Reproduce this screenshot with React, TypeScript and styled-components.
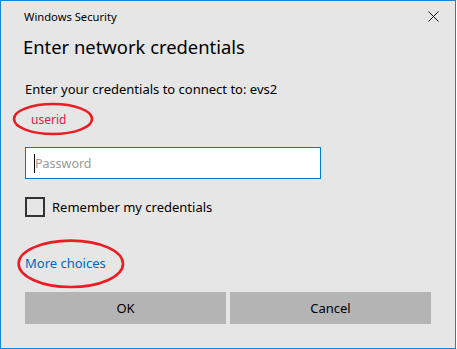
import React from "react";
import styled, { createGlobalStyle } from "styled-components";

const Global = createGlobalStyle`
  html, body { margin: 0; padding: 0; background: #ffffff; }
  body { font-family: "Noto Sans", "Open Sans", sans-serif; }
`;

const Window = styled.div`
  position: relative;
  box-sizing: border-box;
  width: 456px;
  height: 349px;
  background: #e6e6e6;
  border: 1px solid #1883d7;
  color: #000;
  font-family: "Noto Sans", sans-serif;
`;

const TitleBar = styled.div`
  display: flex;
  align-items: center;
  justify-content: space-between;
  height: 31px;
  padding: 0 12px 0 23px;
`;

const TitleText = styled.span`
  font-size: 11.2px;
  color: #000;
`;

const CloseButton = styled.button`
  display: flex;
  align-items: center;
  justify-content: center;
  width: 20px;
  height: 20px;
  padding: 0;
  border: none;
  background: transparent;
`;

const Body = styled.div`
  display: flex;
  flex-direction: column;
  padding: 0 23px 0 24px;
`;

const Heading = styled.h1`
  margin: 1px 0 0 -2px;
  font-size: 18.4px;
  font-weight: 400;
  line-height: 28px;
  color: #000;
`;

const Prompt = styled.p`
  margin: 18px 0 0;
  font-size: 13px;
  line-height: 20px;
`;

const UserName = styled.div`
  margin: 12px 0 0 6px;
  font-size: 12px;
  line-height: 18px;
  color: #e8174a;
`;

const PasswordBox = styled.div`
  display: flex;
  align-items: center;
  box-sizing: border-box;
  width: 296px;
  height: 32px;
  margin-top: 18px;
  padding-left: 8px;
  background: #fff;
  border: 1px solid #0078d7;
`;

const Caret = styled.span`
  width: 1px;
  height: 19px;
  background: #000;
`;

const Placeholder = styled.span`
  font-size: 12.5px;
  color: #9a9a9a;
`;

const CheckRow = styled.label`
  display: flex;
  align-items: center;
  gap: 7px;
  margin-top: 18px;
  font-size: 13px;
  line-height: 20px;
`;

const CheckBox = styled.span`
  box-sizing: border-box;
  width: 20px;
  height: 20px;
  border: 2px solid #333;
`;

const MoreLink = styled.a`
  margin-top: 36px;
  font-size: 13px;
  line-height: 20px;
  color: #0067c0;
  text-decoration: none;
`;

const ButtonRow = styled.div`
  display: flex;
  gap: 4px;
  margin-top: 19px;
  width: 406px;
`;

const DialogButton = styled.button`
  flex: 1;
  height: 32px;
  padding: 0;
  border: none;
  background: #b4b4b4;
  font-family: "Noto Sans", sans-serif;
  font-size: 13px;
  color: #000;
`;

const Annotation = styled.svg`
  position: absolute;
  left: -1px;
  top: -1px;
  pointer-events: none;
`;

export default function App() {
  return (
    <>
      <Global />
      <Window>
        <TitleBar>
          <TitleText>Windows Security</TitleText>
          <CloseButton aria-label="Close">
            <svg width="11" height="11" viewBox="0 0 11 11">
              <path d="M0.5 0.5 L10.5 10.5 M10.5 0.5 L0.5 10.5" stroke="#111" strokeWidth="1" fill="none" />
            </svg>
          </CloseButton>
        </TitleBar>
        <Body>
          <Heading>Enter network credentials</Heading>
          <Prompt>Enter your credentials to connect to: evs2</Prompt>
          <UserName>userid</UserName>
          <PasswordBox>
            <Caret />
            <Placeholder>Password</Placeholder>
          </PasswordBox>
          <CheckRow>
            <CheckBox />
            Remember my credentials
          </CheckRow>
          <MoreLink>More choices</MoreLink>
          <ButtonRow>
            <DialogButton>OK</DialogButton>
            <DialogButton>Cancel</DialogButton>
          </ButtonRow>
        </Body>
        <Annotation width="457" height="349" viewBox="0 0 457 349">
          <ellipse cx="53" cy="119" rx="39" ry="15" fill="none" stroke="#ed1c24" strokeWidth="2.6" />
          <ellipse cx="70.8" cy="263.8" rx="52.2" ry="23.2" fill="none" stroke="#ed1c24" strokeWidth="2.6" />
        </Annotation>
      </Window>
    </>
  );
}
